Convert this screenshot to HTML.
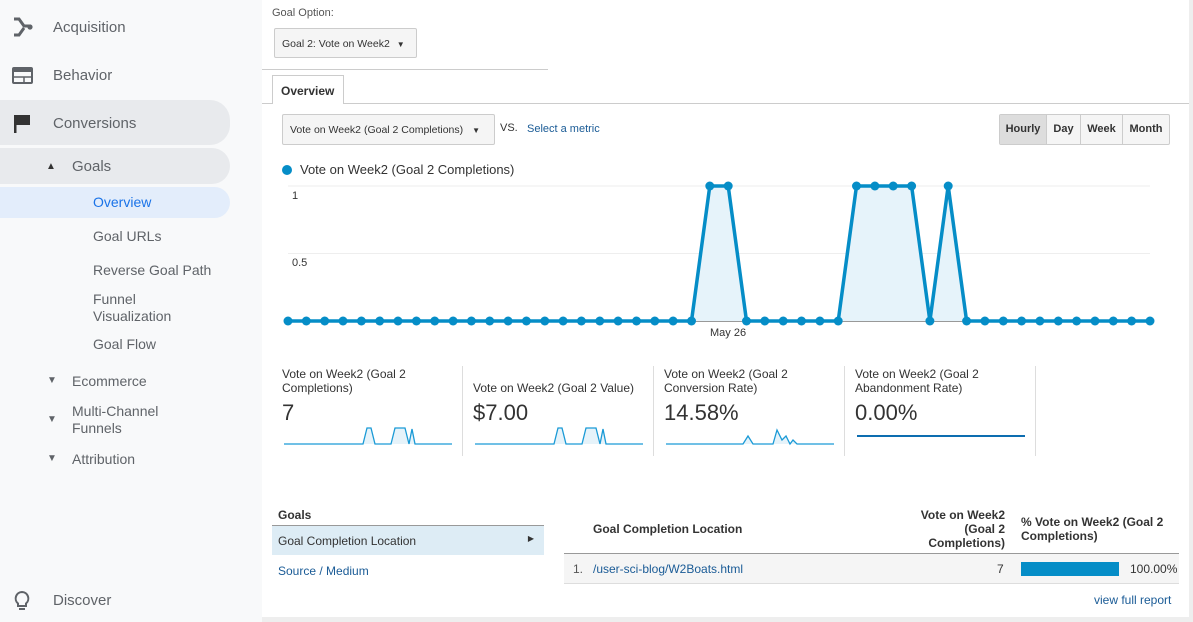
<!DOCTYPE html>
<html><head><meta charset="utf-8"><style>
*{margin:0;padding:0;box-sizing:border-box}
body{width:1193px;height:622px;overflow:hidden;font-family:"Liberation Sans",Arial,sans-serif;background:#fff;position:relative;color:#333}
.a{position:absolute;white-space:nowrap}
#side{position:absolute;left:0;top:0;width:262px;height:622px;background:#f8f9fa}
.nav{font-size:14px;color:#5f6368}
.pill{position:absolute;background:#e8eaed;border-radius:0 20px 20px 0}
.btn{position:absolute;border:1px solid #ccc;background:#f5f5f5;border-radius:2px;font-size:11px;color:#333;white-space:nowrap;overflow:hidden}
.lk{color:#1a5b96}
</style></head><body>
<div id="side">
 <div class="pill" style="left:0;top:100px;width:230px;height:45px"></div>
 <div class="pill" style="left:0;top:148px;width:230px;height:36px"></div>
 <div class="pill" style="left:0;top:187px;width:230px;height:31px;background:#e3edfb"></div>
 <svg class="a" style="left:12px;top:17px" width="22" height="20" viewBox="0 0 22 20"><path d="M2 2 L7 2 L12 9 L17 9 M2 18 L7 18 L12 11" stroke="#5f6368" stroke-width="3" fill="none"/><circle cx="18" cy="10" r="2.6" fill="#5f6368"/></svg>
 <svg class="a" style="left:12px;top:67px" width="21" height="17"><rect x="1" y="1" width="19" height="15" rx="1" fill="none" stroke="#5f6368" stroke-width="2"/><rect x="1" y="1" width="19" height="4" fill="#5f6368"/><path d="M2 10 H19 M12 10 V16" stroke="#5f6368" stroke-width="1.5"/></svg>
 <svg class="a" style="left:14px;top:114px" width="18" height="20"><rect x="0" y="1" width="2.5" height="18" fill="#333"/><path d="M2 1 H16 V11 H2 Z" fill="#333"/></svg>
 <svg class="a" style="left:13px;top:590px" width="18" height="22"><path d="M9 2 a6.5 6.5 0 0 1 4 11.5 V16 H5 V13.5 A6.5 6.5 0 0 1 9 2 Z" fill="none" stroke="#5f6368" stroke-width="2"/><path d="M6 19 H12" stroke="#5f6368" stroke-width="2"/></svg>
 <div class="a nav" style="left:53px;top:19px;font-size:15px">Acquisition</div>
 <div class="a nav" style="left:53px;top:67px;font-size:15px">Behavior</div>
 <div class="a nav" style="left:53px;top:115px;font-size:15px">Conversions</div>
 <div class="a" style="left:46px;top:161px;font-size:10px;color:#333">▲</div>
 <div class="a nav" style="left:72px;top:158px;font-size:15px">Goals</div>
 <div class="a nav" style="left:93px;top:194px;color:#1a73e8;font-size:14px">Overview</div>
 <div class="a nav" style="left:93px;top:228px">Goal URLs</div>
 <div class="a nav" style="left:93px;top:262px">Reverse Goal Path</div>
 <div class="a nav" style="left:93px;top:291px;line-height:17px">Funnel<br>Visualization</div>
 <div class="a nav" style="left:93px;top:336px">Goal Flow</div>
 <div class="a nav" style="left:47px;top:375px;font-size:10px">▼</div>
 <div class="a nav" style="left:72px;top:373px">Ecommerce</div>
 <div class="a nav" style="left:47px;top:414px;font-size:10px">▼</div>
 <div class="a nav" style="left:72px;top:403px;line-height:17px">Multi-Channel<br>Funnels</div>
 <div class="a nav" style="left:47px;top:453px;font-size:10px">▼</div>
 <div class="a nav" style="left:72px;top:451px">Attribution</div>
 <div class="a nav" style="left:53px;top:592px;font-size:15px">Discover</div>
</div>
<div class="a" style="left:1189px;top:0;width:4px;height:622px;background:#eee"></div>
<div class="a" style="left:262px;top:617px;width:931px;height:5px;background:#eee"></div>

<div class="a" style="left:272px;top:7px;font-size:11px;color:#555">Goal Option:</div>
<div class="btn" style="left:274px;top:28px;width:143px;height:30px;padding:9px 7px;font-size:10.5px">Goal 2: Vote on Week2 <span style="font-size:8px;margin-left:4px">▼</span></div>
<div class="a" style="left:262px;top:69px;width:286px;height:1px;background:#ccc"></div>
<div class="a" style="left:262px;top:103px;width:927px;height:1px;background:#ccc"></div>
<div class="a" style="left:272px;top:75px;width:72px;height:29px;border:1px solid #ccc;border-bottom:none;background:#fff;font-size:12px;font-weight:bold;padding:8px 8px">Overview</div>
<div class="btn" style="left:282px;top:114px;width:213px;height:31px;padding:9px 7px;font-size:10.5px">Vote on Week2 (Goal 2 Completions) <span style="font-size:8px;margin-left:6px">▼</span></div>
<div class="a" style="left:500px;top:122px;font-size:11px">VS.</div>
<div class="a lk" style="left:527px;top:123px;font-size:11px">Select a metric</div>
<div class="a" style="left:999px;top:114px;width:171px;height:31px;border:1px solid #ccc;border-radius:2px;display:flex;font-size:11px;font-weight:bold;background:#f5f5f5">
 <div style="width:47px;background:#ddd;border-right:1px solid #ccc;padding-top:8px;text-align:center">Hourly</div>
 <div style="width:34px;border-right:1px solid #ccc;padding-top:8px;text-align:center">Day</div>
 <div style="width:42px;border-right:1px solid #ccc;padding-top:8px;text-align:center">Week</div>
 <div style="flex:1;padding-top:8px;text-align:center">Month</div>
</div>
<div class="a" style="left:282px;top:165px;width:10px;height:10px;border-radius:50%;background:#058dc7"></div>
<div class="a" style="left:300px;top:162px;font-size:13px">Vote on Week2 (Goal 2 Completions)</div>

<svg class="a" style="left:0;top:0" width="1193" height="360">
 <path d="M288 186 H1150 M288 253.5 H1150" stroke="#eee"/>
 <path d="M288 321 H1150" stroke="#333"/>
 <text x="292" y="199" font-size="11" fill="#333" font-family="Liberation Sans">1</text>
 <text x="292" y="266" font-size="11" fill="#333" font-family="Liberation Sans">0.5</text>
 <text x="710" y="336" font-size="11" fill="#333" font-family="Liberation Sans">May 26</text>
 <path d="M288 321 L691.5 321 L709.8 186 L728.2 186 L746.5 321 L838.2 321 L856.5 186 L911.6 186 L929.9 321 L948.2 186 L966.6 321 L1150 321 Z" fill="#e6f3fa"/>
 <polyline points="288,321 691.5,321 709.8,186 728.2,186 746.5,321 838.2,321 856.5,186 911.6,186 929.9,321 948.2,186 966.6,321 1150,321" fill="none" stroke="#058dc7" stroke-width="3.5"/>
 <g fill="#058dc7">
 <circle cx="288" cy="321" r="4.5"/><circle cx="306.3" cy="321" r="4.5"/><circle cx="324.7" cy="321" r="4.5"/><circle cx="343" cy="321" r="4.5"/><circle cx="361.4" cy="321" r="4.5"/><circle cx="379.7" cy="321" r="4.5"/><circle cx="398" cy="321" r="4.5"/><circle cx="416.4" cy="321" r="4.5"/><circle cx="434.7" cy="321" r="4.5"/><circle cx="453.1" cy="321" r="4.5"/><circle cx="471.4" cy="321" r="4.5"/><circle cx="489.7" cy="321" r="4.5"/><circle cx="508.1" cy="321" r="4.5"/><circle cx="526.4" cy="321" r="4.5"/><circle cx="544.8" cy="321" r="4.5"/><circle cx="563.1" cy="321" r="4.5"/><circle cx="581.4" cy="321" r="4.5"/><circle cx="599.8" cy="321" r="4.5"/><circle cx="618.1" cy="321" r="4.5"/><circle cx="636.5" cy="321" r="4.5"/><circle cx="654.8" cy="321" r="4.5"/><circle cx="673.1" cy="321" r="4.5"/><circle cx="691.5" cy="321" r="4.5"/><circle cx="709.8" cy="186" r="4.5"/><circle cx="728.2" cy="186" r="4.5"/><circle cx="746.5" cy="321" r="4.5"/><circle cx="764.8" cy="321" r="4.5"/><circle cx="783.2" cy="321" r="4.5"/><circle cx="801.5" cy="321" r="4.5"/><circle cx="819.9" cy="321" r="4.5"/><circle cx="838.2" cy="321" r="4.5"/><circle cx="856.5" cy="186" r="4.5"/><circle cx="874.9" cy="186" r="4.5"/><circle cx="893.2" cy="186" r="4.5"/><circle cx="911.6" cy="186" r="4.5"/><circle cx="929.9" cy="321" r="4.5"/><circle cx="948.2" cy="186" r="4.5"/><circle cx="966.6" cy="321" r="4.5"/><circle cx="984.9" cy="321" r="4.5"/><circle cx="1003.3" cy="321" r="4.5"/><circle cx="1021.6" cy="321" r="4.5"/><circle cx="1039.9" cy="321" r="4.5"/><circle cx="1058.3" cy="321" r="4.5"/><circle cx="1076.6" cy="321" r="4.5"/><circle cx="1095" cy="321" r="4.5"/><circle cx="1113.3" cy="321" r="4.5"/><circle cx="1131.6" cy="321" r="4.5"/><circle cx="1150" cy="321" r="4.5"/>
 </g>
</svg>

<div class="a" style="left:282px;top:367px;font-size:12px;line-height:14px">Vote on Week2 (Goal 2<br>Completions)</div>
<div class="a" style="left:282px;top:400px;font-size:22px">7</div>
<div class="a" style="left:462px;top:366px;width:1px;height:90px;background:#ddd"></div>
<div class="a" style="left:473px;top:381px;font-size:12px">Vote on Week2 (Goal 2 Value)</div>
<div class="a" style="left:473px;top:400px;font-size:22px">$7.00</div>
<div class="a" style="left:653px;top:366px;width:1px;height:90px;background:#ddd"></div>
<div class="a" style="left:664px;top:367px;font-size:12px;line-height:14px">Vote on Week2 (Goal 2<br>Conversion Rate)</div>
<div class="a" style="left:664px;top:400px;font-size:22px">14.58%</div>
<div class="a" style="left:844px;top:366px;width:1px;height:90px;background:#ddd"></div>
<div class="a" style="left:855px;top:367px;font-size:12px;line-height:14px">Vote on Week2 (Goal 2<br>Abandonment Rate)</div>
<div class="a" style="left:855px;top:400px;font-size:22px">0.00%</div>
<div class="a" style="left:1035px;top:366px;width:1px;height:90px;background:#ddd"></div>
<svg class="a" style="left:0;top:420px" width="1193" height="30">
 <g fill="#e6f3fa" stroke="#1a9ad6" stroke-width="1.3">
 <path d="M284 24 H363 L367 8 H371 L375 24 H391 L395 8 H405 L409 24 L412 9 L415 24 H452"/>
 <path d="M475 24 H554 L558 8 H562 L566 24 H582 L586 8 H596 L600 24 L603 9 L606 24 H643"/>
 <path d="M666 24 H743 L748 16 L753 24 H773 L777 10 L782 20 L786 16 L790 24 L793 20 L797 24 H834"/>
 </g>
 <path d="M857 16 H1025" stroke="#0d6db0" stroke-width="2"/>
</svg>

<div class="a" style="left:278px;top:508px;font-size:12px;font-weight:bold">Goals</div>
<div class="a" style="left:272px;top:525px;width:272px;height:1px;background:#999"></div>
<div class="a" style="left:272px;top:526px;width:272px;height:29px;background:#ddecf5;font-size:12px;padding:8px 6px">Goal Completion Location <span style="position:absolute;right:10px;font-size:8px">▶</span></div>
<div class="a lk" style="left:278px;top:564px;font-size:12px">Source / Medium</div>
<div class="a" style="left:593px;top:522px;font-size:12px;font-weight:bold">Goal Completion Location</div>
<div class="a" style="left:905px;top:508px;font-size:12px;font-weight:bold;text-align:right;line-height:14px;width:100px;white-space:normal">Vote on Week2 (Goal 2 Completions)</div>
<div class="a" style="left:1021px;top:515px;font-size:12px;font-weight:bold;line-height:14px">% Vote on Week2 (Goal 2<br>Completions)</div>
<div class="a" style="left:564px;top:553px;width:615px;height:1px;background:#999"></div>
<div class="a" style="left:564px;top:554px;width:615px;height:30px;background:#f5f5f5;border-bottom:1px solid #ddd"></div>
<div class="a" style="left:573px;top:562px;font-size:12px;color:#555">1.</div>
<div class="a lk" style="left:593px;top:562px;font-size:12px">/user-sci-blog/W2Boats.html</div>
<div class="a" style="left:997px;top:562px;font-size:12px">7</div>
<div class="a" style="left:1021px;top:562px;width:98px;height:14px;background:#058dc7"></div>
<div class="a" style="left:1130px;top:562px;font-size:12px">100.00%</div>
<div class="a lk" style="left:1094px;top:593px;font-size:12px">view full report</div>
</body></html>
